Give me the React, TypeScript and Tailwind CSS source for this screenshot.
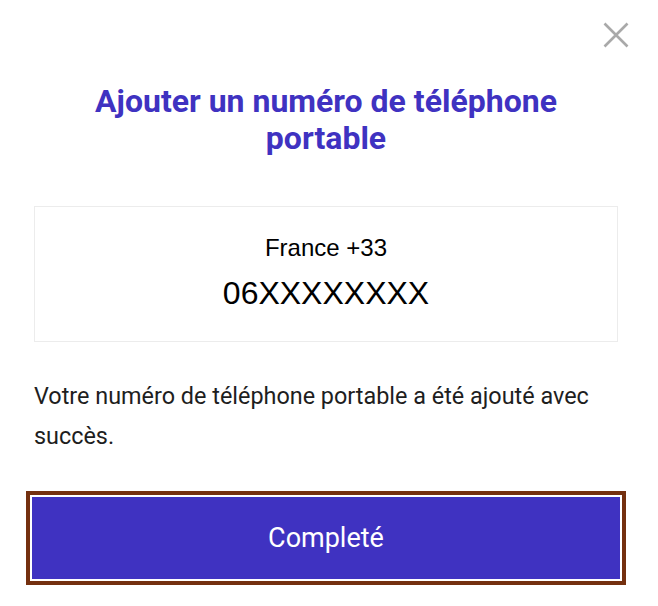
import React from "react";

export default function App() {
  return (
    <div className="relative w-[658px] h-[606px] bg-white font-['Roboto',sans-serif]">
      {/* close */}
      <button
        className="absolute left-[602px] top-[21px] w-[28px] h-[28px] flex items-center justify-center text-[#a9a9a9]"
        aria-label="Fermer"
      >
        <svg viewBox="0 0 28 28" className="w-[28px] h-[28px]" fill="none" stroke="currentColor" strokeWidth={2.6}>
          <path d="M2.5 2.5l23 23M25.5 2.5l-23 23" />
        </svg>
      </button>

      <div className="pl-[34px] pr-[40px] pt-[83px]">
        <h1 className="text-center text-[32px] leading-[37px] font-bold text-[#3f32c1] px-[20px]">
          Ajouter un numéro de téléphone portable
        </h1>

        <div className="mt-[49px] h-[136px] border border-[#ececec] flex flex-col items-center pt-[27px] font-['Liberation_Sans',Arial,sans-serif] text-black">
          <div className="text-[24px] leading-[27px]">France +33</div>
          <div className="mt-[14px] text-[32px] leading-[36px]">06XXXXXXXX</div>
        </div>

        <p className="mt-[34px] text-[23.4px] leading-[40px] text-[#1e1e1e]">
          Votre numéro de téléphone portable a été ajouté avec succès.
        </p>

        <button className="mt-[41px] -ml-[2px] w-[588px] h-[82px] bg-[#3f32c1] text-white text-[27px] outline-[4px] outline-solid outline-offset-[2px] outline-[#74300f]">
          Completé
        </button>
      </div>
    </div>
  );
}
